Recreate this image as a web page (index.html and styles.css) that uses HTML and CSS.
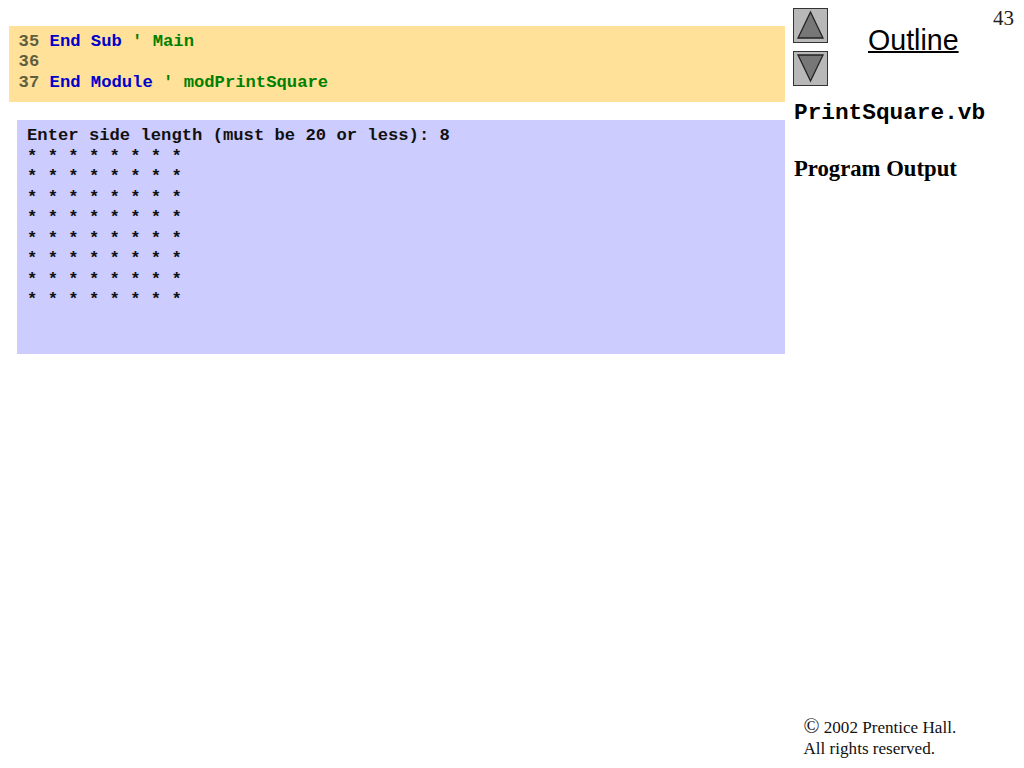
FILE: index.html
```html
<!DOCTYPE html>
<html lang="en">
<head>
<meta charset="utf-8">
<title>PrintSquare.vb</title>
<link rel="stylesheet" href="styles.css">
</head>
<body>
<div class="slide">
  <main class="main">
    <pre class="code"><span class="num">35</span> <span class="kw">End Sub</span> <span class="cm">' Main</span>
<span class="num">36</span>
<span class="num">37</span> <span class="kw">End Module</span> <span class="cm">' modPrintSquare</span></pre>
    <pre class="output">Enter side length (must be 20 or less): 8
* * * * * * * *
* * * * * * * *
* * * * * * * *
* * * * * * * *
* * * * * * * *
* * * * * * * *
* * * * * * * *
* * * * * * * *</pre>
  </main>
  <aside class="side">
    <div class="nav">
      <div class="arrows">
        <svg class="arrow" width="35" height="35" viewBox="0 0 35 35"><rect x=".5" y=".5" width="34" height="34" fill="#b8b8b8" stroke="#333"/><path d="M17.5 4 L30 30 H5 Z" fill="#777" stroke="#222" stroke-width="1.3"/></svg>
        <svg class="arrow" width="35" height="35" viewBox="0 0 35 35"><rect x=".5" y=".5" width="34" height="34" fill="#b8b8b8" stroke="#333"/><path d="M17.5 30 L30 4 H5 Z" fill="#777" stroke="#222" stroke-width="1.3"/></svg>
      </div>
      <a class="outline">Outline</a>
    </div>
    <div class="file">PrintSquare.vb</div>
    <div class="label">Program Output</div>
    <div class="copy"><span class="mark">©</span> 2002 Prentice Hall.<br>All rights reserved.</div>
  </aside>
  <div class="page">43</div>
</div>
</body>
</html>
```

FILE: styles.css
```css
html, body { margin: 0; padding: 0; background: #fff; }
.slide {
  position: relative;
  width: 1024px;
  height: 768px;
  overflow: hidden;
  display: flex;
}
.main {
  width: 785px;
  padding: 26px 0 0 9px;
  box-sizing: border-box;
  display: flex;
  flex-direction: column;
  gap: 18px;
  flex: none;
}
pre {
  margin: 0;
  font-family: "Liberation Mono", monospace;
  font-weight: 700;
  font-size: 17.2px;
  line-height: 20.5px;
  box-sizing: border-box;
}
.code {
  height: 76px;
  padding: 5.5px 0 0 9.6px;
  background: #ffe199;
}
.num { color: #5f5f3f; }
.kw { color: #0000cc; }
.cm { color: #008000; }
.output {
  height: 234px;
  margin-left: 8px;
  padding: 6px 0 0 10px;
  background: #ccccff;
  color: #111;
}
.side {
  flex: 1;
  padding: 8px 0 0 9px;
  display: flex;
  flex-direction: column;
  color: #000;
}
.nav { display: flex; gap: 39px; }
.arrows { display: flex; flex-direction: column; gap: 8px; margin-left: -1px; }
.arrow { display: block; }
.outline {
  margin-top: 16px;
  margin-left: 1px;
  font-family: "Liberation Sans", sans-serif;
  font-size: 28.6px;
  line-height: 33px;
  height: 33px;
  text-decoration: underline;
  text-decoration-thickness: 1.5px;
}
.file {
  margin-top: 14px;
  font-family: "Liberation Mono", monospace;
  font-weight: 700;
  font-size: 22.75px;
  line-height: 26px;
}
.label {
  margin-top: 30px;
  font-family: "Liberation Serif", serif;
  font-weight: 700;
  font-size: 22.7px;
  line-height: 26px;
}
.copy {
  margin-top: auto;
  margin-left: 9.5px;
  margin-bottom: 9px;
  font-family: "Liberation Serif", serif;
  font-size: 17.1px;
  line-height: 21px;
  color: #111;
}
.mark { font-size: 21px; line-height: 21px; }
.page {
  position: absolute;
  top: 6px;
  left: 993px;
  font-family: "Liberation Serif", serif;
  font-size: 21px;
  line-height: 24px;
  color: #222;
}
```
